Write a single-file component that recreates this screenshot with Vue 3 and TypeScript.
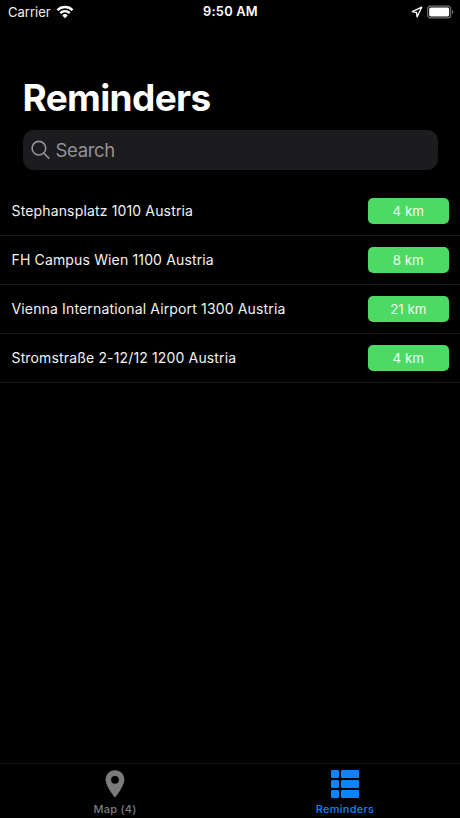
<script setup lang="ts">
interface Reminder {
  address: string
  distance: string
}

const reminders: Reminder[] = [
  { address: 'Stephansplatz 1010 Austria', distance: '4 km' },
  { address: 'FH Campus Wien 1100 Austria', distance: '8 km' },
  { address: 'Vienna International Airport 1300 Austria', distance: '21 km' },
  { address: 'Stromstraße 2-12/12 1200 Austria', distance: '4 km' },
]
</script>

<template>
  <div class="screen">
    <header class="status">
      <div class="status-left">
        <span class="carrier">Carrier</span>
        <svg class="wifi" width="18" height="14" viewBox="0 0 18 14">
          <g fill="none" stroke="#fff" stroke-width="2.4">
            <path d="M1.5 5.1a10.6 10.6 0 0 1 15 0" />
            <path d="M4.3 8.1a6.6 6.6 0 0 1 9.4 0" />
          </g>
          <path d="M9 13.2 6.3 10.4a3.8 3.8 0 0 1 5.4 0z" fill="#fff" />
        </svg>
      </div>
      <span class="time">9:50 AM</span>
      <div class="status-right">
        <svg width="12" height="12" viewBox="0 0 12 12">
          <path d="M10.7 1.2 1.3 5.7l4.2.8.6 4.4z" fill="none" stroke="#fff" stroke-width="1.3" stroke-linejoin="round" />
        </svg>
        <svg width="28" height="14" viewBox="0 0 28 14">
          <rect x="0.7" y="1.1" width="23" height="11.8" rx="3" fill="none" stroke="#777" stroke-width="1.1" />
          <rect x="2.2" y="2.6" width="20" height="8.8" rx="1.6" fill="#fff" />
          <path d="M25 5.1q1.3.5 1.3 1.9t-1.3 1.9z" fill="#777" />
        </svg>
      </div>
    </header>

    <h1 class="title">Reminders</h1>

    <div class="search">
      <svg width="20" height="20" viewBox="0 0 20 20">
        <g fill="none" stroke="#929297" stroke-width="1.6" stroke-linecap="round">
          <circle cx="7.9" cy="8.2" r="6.8" />
          <path d="m12.9 13.2 4.9 4.9" />
        </g>
      </svg>
      <span class="placeholder">Search</span>
    </div>

    <ul class="list">
      <li v-for="item in reminders" :key="item.address" class="row">
        <span class="address">{{ item.address }}</span>
        <span class="badge">{{ item.distance }}</span>
      </li>
    </ul>

    <nav class="tabs">
      <div class="tab">
        <svg width="30" height="30" viewBox="0 0 30 30">
          <path fill="#7b7b7b" fill-rule="evenodd" d="M15 1.2c-5.3 0-9.4 4.1-9.4 9.3C5.6 17.4 15 28.6 15 28.6s9.4-11.2 9.4-18.1c0-5.2-4.1-9.3-9.4-9.3zm0 5.7a3.9 3.9 0 1 1 0 7.8 3.9 3.9 0 0 1 0-7.8z" />
        </svg>
        <span class="label">Map (4)</span>
      </div>
      <div class="tab active">
        <svg width="30" height="30" viewBox="0 0 30 30" fill="#0a84ff">
          <rect x="1" y="1" width="8" height="8" rx="1.2" />
          <rect x="11" y="1" width="18" height="8" rx="1.2" />
          <rect x="1" y="11" width="8" height="8" rx="1.2" />
          <rect x="11" y="11" width="18" height="8" rx="1.2" />
          <rect x="1" y="21" width="8" height="8" rx="1.2" />
          <rect x="11" y="21" width="18" height="8" rx="1.2" />
        </svg>
        <span class="label">Reminders</span>
      </div>
    </nav>
  </div>
</template>

<style>
body {
  background: #000;
}
</style>

<style scoped>
.screen {
  display: flex;
  flex-direction: column;
  width: 460px;
  height: 818px;
  overflow: hidden;
  background: #000;
  color: #fff;
  font-family: Inter, "Liberation Sans", sans-serif;
}
.status {
  display: grid;
  grid-template-columns: 1fr auto 1fr;
  align-items: center;
  height: 24px;
  padding: 0 5px 0 8px;
  font-size: 13px;
  line-height: 24px;
}
.status-left,
.status-right {
  display: flex;
  align-items: center;
  height: 23px;
}
.status-left {
  gap: 5px;
}
.status-right {
  justify-content: flex-end;
  gap: 4px;
}
.carrier {
  color: #f0f0f0;
  letter-spacing: 0;
}
.time {
  font-weight: 600;
  font-size: 12.8px;
  letter-spacing: 0.25px;
  transform: translateX(-1px);
}
.title {
  margin: 51px 0 0 22.5px;
  font-size: 37px;
  font-weight: 700;
  line-height: 46px;
  letter-spacing: -0.65px;
}
.search {
  display: flex;
  align-items: center;
  gap: 5px;
  box-sizing: border-box;
  height: 40px;
  margin: 9px 22.5px 0;
  padding-left: 8px;
  border-radius: 11px;
  background: #1c1c1e;
}
.placeholder {
  color: #929297;
  font-size: 18.5px;
  line-height: 40px;
  letter-spacing: -0.35px;
}
.list {
  margin: 17px 0 0;
  padding: 0;
  list-style: none;
}
.row {
  display: flex;
  align-items: center;
  justify-content: space-between;
  box-sizing: border-box;
  height: 49px;
  padding: 0 11.5px;
  border-bottom: 1px solid #191919;
}
.address {
  color: #f2f2f2;
  font-size: 14px;
  line-height: 20px;
  letter-spacing: 0.15px;
  white-space: nowrap;
}
.badge {
  width: 80.5px;
  height: 26.6px;
  border-radius: 5px;
  background: #4cd964;
  color: #f2fff4;
  font-size: 13.3px;
  line-height: 26.6px;
  text-align: center;
}
.tabs {
  display: flex;
  box-sizing: border-box;
  height: 55px;
  margin-top: auto;
  padding-top: 5px;
  border-top: 1px solid #141414;
}
.tab {
  display: flex;
  flex: 1;
  flex-direction: column;
  align-items: center;
  gap: 4px;
  color: #7b7b7b;
}
.active {
  color: #0a84ff;
}
.label {
  font-size: 11px;
  font-weight: 500;
  line-height: 13px;
  letter-spacing: 0.25px;
}
</style>
